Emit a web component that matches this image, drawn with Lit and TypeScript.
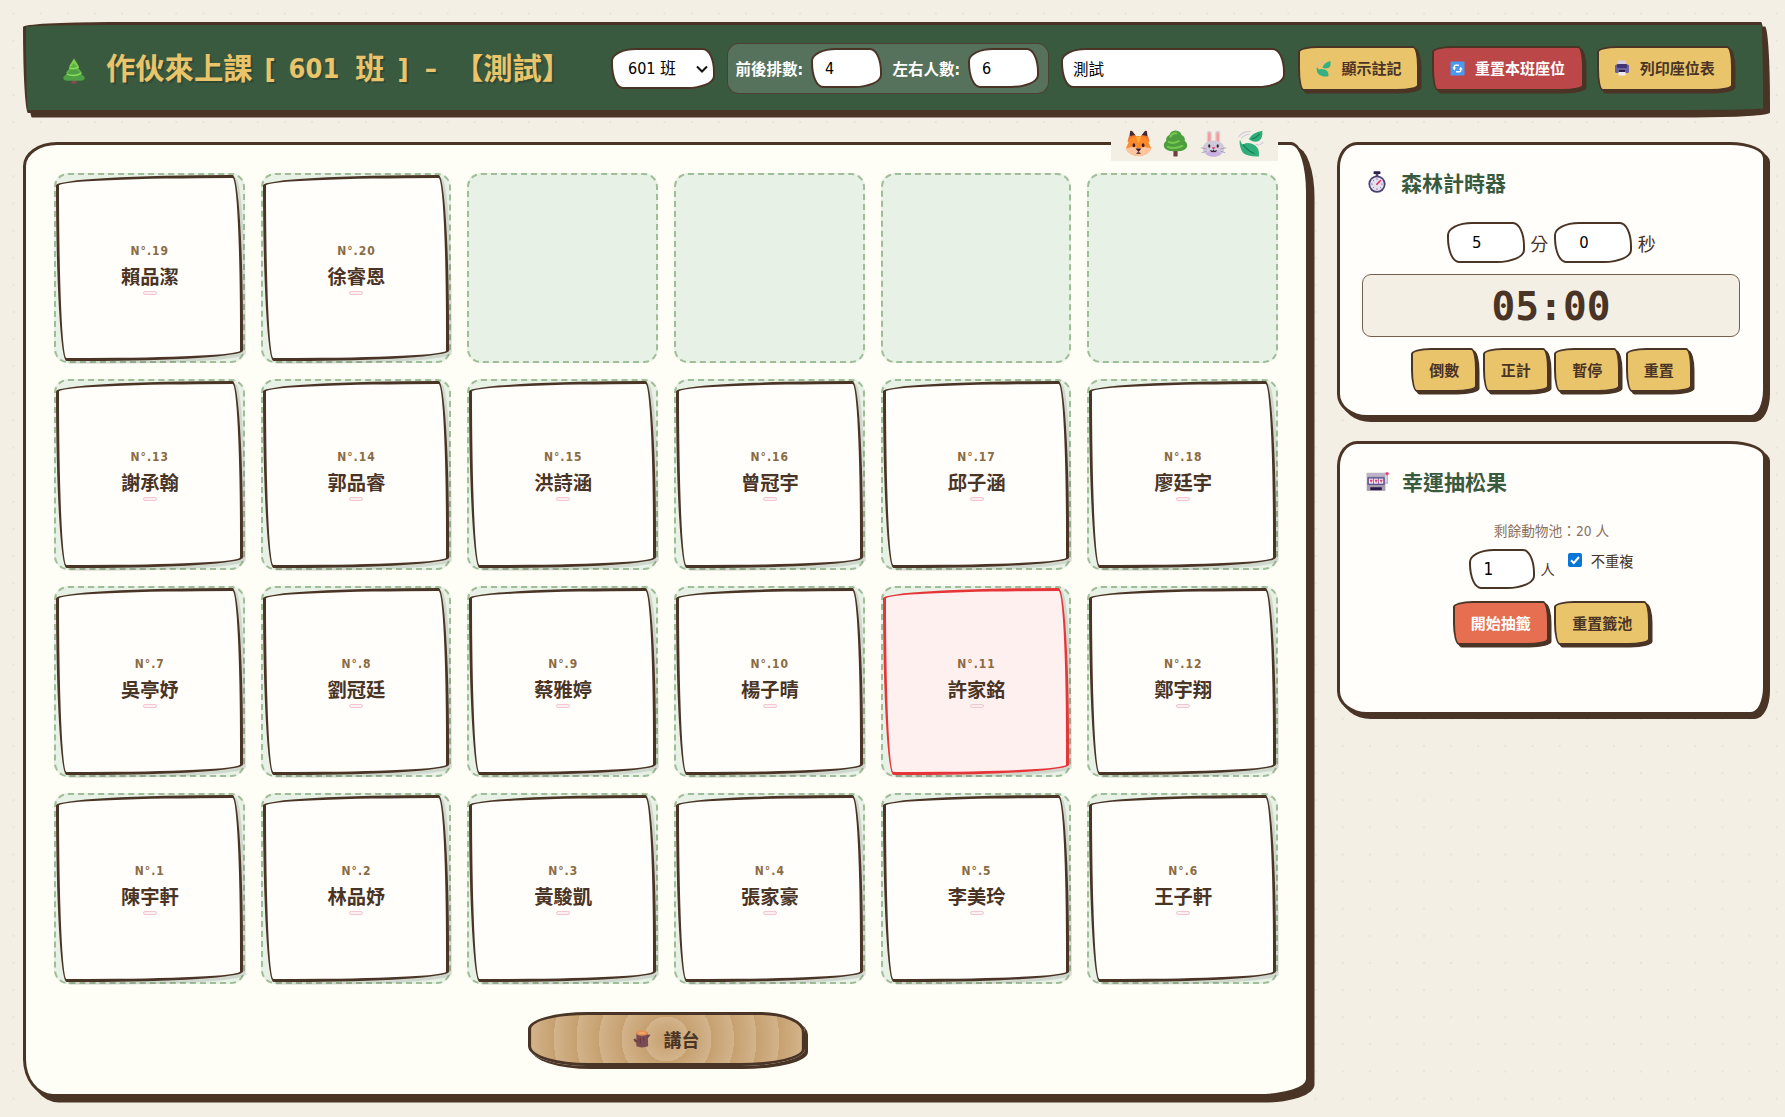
import { LitElement, html, css, svg, nothing } from "lit";
import { customElement, property } from "lit/decorators.js";

const ICONS: Record<string, unknown> = {
  pine: svg`<rect x="13" y="26" width="6" height="5.500" fill="#8b4a52"/><path d="M16 0.500 L22 10 Q16 14 10 10Z" fill="#7fcf4a"/><path d="M16 6 L26 18 Q16 23 6 18Z" fill="#5fb047"/><path d="M16 12 L29 23 Q30 28 24 28 H8 Q2 28 3 23Z" fill="#4f9f45"/><path d="M10 12 Q16 15 22 11 M7 19.500 Q16 24 25 18.500" stroke="#8ade55" stroke-width="1.800" fill="none"/>`,
  fox: svg`<path d="M3 14 L6 2 Q7 0 9 2 L14 8 H18 L23 2 Q25 0 26 2 L29 14 Z" fill="#f2722b"/><path d="M6 2 Q7 0 9 2 L12 6 L6 7Z M26 2 Q25 0 23 2 L20 6 L26 7Z" fill="#3d2a3a"/><path d="M4 15 Q5 7 16 7 Q27 7 28 15 L31 22 Q27 31 16 31 Q5 31 1 22Z" fill="#ff8a2c"/><path d="M1 22 Q10 18 16 22 Q22 18 31 22 Q27 31 16 31 Q5 31 1 22Z" fill="#ffc5a0"/><path d="M13 8 L16 16 L19 8Z" fill="#ffb13d"/><ellipse cx="10.500" cy="18" rx="1.600" ry="2.300" fill="#3b1f2b"/><ellipse cx="21.500" cy="18" rx="1.600" ry="2.300" fill="#3b1f2b"/><path d="M12.500 22 H19.500 L16 26Z M13 28 Q16 25 19 28" fill="#2f1a2a"/>`,
  tree: svg`<rect x="13.500" y="23" width="5" height="8.500" rx="1" fill="#6d4048"/><path d="M16 0.500 Q22 1 23 5.500 Q28 8 27 13 Q31 16 29.500 20.500 Q26 26 16 25 Q6 26 2.500 20.500 Q1 16 5 13 Q4 8 9 5.500 Q10 1 16 0.500Z" fill="#4d9e3e"/><path d="M10 8 Q12 3 17 4 M8 14 Q14 17 20 13 M7 20 Q14 23 24 19" stroke="#76c94e" stroke-width="2.400" fill="none" stroke-linecap="round"/>`,
  rabbit: svg`<rect x="8" y="1" width="6" height="15" rx="3" fill="#d6d0d8"/><rect x="18" y="1" width="6" height="15" rx="3" fill="#d6d0d8"/><rect x="9.500" y="3" width="3" height="12" rx="1.500" fill="#f79a9c"/><rect x="19.500" y="3" width="3" height="12" rx="1.500" fill="#f79a9c"/><ellipse cx="16" cy="22" rx="13" ry="9.700" fill="#cfcad8"/><ellipse cx="16" cy="28" rx="8.500" ry="3.500" fill="#c9b0e2"/><ellipse cx="11" cy="19" rx="1.300" ry="2" fill="#33202e"/><ellipse cx="21" cy="19" rx="1.300" ry="2" fill="#33202e"/><path d="M13.800 20.500 H18.200 L16 23.500Z" fill="#f4287d"/><path d="M12.500 24 Q14.500 27 16 24.500 Q17.500 27 19.500 24" stroke="#33202e" stroke-width="1.500" fill="none"/><path d="M1 21 L8 22.500 M2 27 L8 25 M31 21 L24 22.500 M30 27 L24 25" stroke="#a49cb3" stroke-width="1"/>`,
  leaf: svg`<path d="M3 13 Q3 21 7 27 Q13 32 26 31.500 Q27 20 19 17 Q12 14 8 17 Q5 17 4 12Z" fill="#2fae7b"/><path d="M14 11 Q18 3 30 1 Q31 10 26 13 Q21 15 16 12 Z" fill="#2fae7b"/><path d="M7 17 Q13 25 21 28 M17 11 Q23 9 27 5" stroke="#157a55" stroke-width="1.200" fill="none"/><path d="M2 8 Q7 1 16 2 M5 10 Q9 5 15 5 M31 14 Q28 19 22 17" stroke="#d3cbdc" stroke-width="1.300" fill="none"/>`,
  herb: svg`<path d="M3 15 Q3 26 11 29 Q17 32 25 31 Q27 21 18 18 Q11 16 7 18 Q6 17 5 14Z" fill="#35b083"/><path d="M14 14 Q17 5 29 2 Q31 12 25 15 Q19 17 14 14Z" fill="#35b083"/><path d="M4 10 Q9 3 16 4" stroke="#d8c194" stroke-width="3" fill="none"/>`,
  refresh: svg`<rect x="1" y="1" width="30" height="30" rx="2" fill="#4a9af0"/><path d="M9 16 V12 Q9 9 12 9 H19 M23 16 V20 Q23 23 20 23 H13" fill="none" stroke="#fff" stroke-width="3"/><path d="M5 14 H13 L9 20Z M19 18 H27 L23 12Z" fill="#fff"/>`,
  printer: svg`<rect x="8" y="1" width="16" height="11" fill="#d5cde4"/><rect x="2" y="9" width="28" height="17" rx="3" fill="#6a5fa3"/><rect x="6" y="8" width="20" height="8" rx="2" fill="#41376e"/><rect x="9" y="19" width="14" height="12" fill="#efeaf7"/><rect x="9" y="19" width="14" height="5" fill="#2a2050"/>`,
  timer: svg`<rect x="11" y="0.500" width="10" height="4" rx="1" fill="#2d1c4a"/><rect x="14" y="4" width="4" height="4" fill="#54457a"/><circle cx="16" cy="19" r="12.500" fill="#4a3d74"/><circle cx="16" cy="19" r="10" fill="#e5e0ee"/><path d="M16 10.500 V13 M16 25 V27.500 M7.500 19 H10 M22 19 H24.500 M10 13 L11.500 14.500 M10 25 L11.500 23.500 M22 25 L20.500 23.500" stroke="#7b7194" stroke-width="1.300"/><path d="M15 20 L21.500 13.500" stroke="#ea2860" stroke-width="2.400"/>`,
  slot: svg`<path d="M1 4 H27 V29 H1Z" fill="#a59cae"/><rect x="1" y="4" width="26" height="5" fill="#bcb3c6"/><rect x="2" y="10" width="24" height="11" rx="1" fill="#5b5590"/><rect x="4" y="12" width="6" height="7" fill="#fbe7f1"/><rect x="11" y="12" width="6" height="7" fill="#fbe7f1"/><rect x="18" y="12" width="6" height="7" fill="#fbe7f1"/><path d="M5 13.500 H9.500 L7 18Z M12 13.500 H16.500 L14 18Z M19 13.500 H23.500 L21 18Z" fill="#ee3a76"/><rect x="6" y="24" width="16" height="4" fill="#2b1648"/><path d="M27 18 H29.500 V7" stroke="#b5adbf" stroke-width="2" fill="none"/><circle cx="29.300" cy="5" r="2.300" fill="#f23c73"/>`,
  log: svg`<path d="M6 5 H26 L27 29 Q16 33 6 29Z" fill="#7a4b52"/><path d="M1 16 Q2 22 8 23 V18 Q5 18 4 15Z M31 9 L25 16 V10 L28 8Z" fill="#6b3f49"/><ellipse cx="16" cy="5.500" rx="10.500" ry="4.500" fill="#e39055"/><ellipse cx="16" cy="5.500" rx="6" ry="2" fill="#f2a56c"/><path d="M13 14 V24 M19 13 V19" stroke="#5e3540" stroke-width="1.500"/>`,
};

@customElement("forest-icon")
class ForestIcon extends LitElement {
  @property() name = "";
  @property({ type: Number }) size = 16;
  static styles = css`
    :host { display: inline-flex; flex: none; }
    svg { display: block; }
  `;
  render() {
    return html`<svg width=${this.size} height=${this.size} viewBox="0 0 32 32">${ICONS[this.name] ?? nothing}</svg>`;
  }
}

@customElement("seat-card")
class SeatCard extends LitElement {
  @property({ type: Number }) no = 0;
  @property() name = "";
  @property({ type: Boolean, reflect: true }) marked = false;
  static styles = css`
    :host {
      box-sizing: border-box; display: flex; flex-direction: column; align-items: center;
      width: 100%; height: 100%; padding: 65px 0 0 1px; background: #fffefb;
      border: 3px solid #4a3426;
      border-radius: 255px 15px 225px 15px / 15px 225px 15px 255px;
      box-shadow: 3px 3px 0 rgba(0, 0, 0, 0.1);
    }
    :host([marked]) { background: #fff0f0; border-color: #e63539; }
    .no {
      font: 700 12px/17px "DejaVu Sans Condensed", sans-serif;
      color: #8b6b43; letter-spacing: 1px;
    }
    .name { font: 700 19.3px/25px "Noto Sans CJK TC", sans-serif; margin-top: 4px; color: #4a3426; }
    .note {
      box-sizing: border-box; width: 14px; height: 4px; margin-top: 2px;
      border: 1px solid #f5c6d0; border-radius: 2px; background: #fdf0f2;
    }
  `;
  render() {
    return html`<span class="no">N°.${this.no}</span><span class="name">${this.name}</span><span class="note"></span>`;
  }
}

const ROWS: string[][] = [
  ["賴品潔", "徐睿恩", "", "", "", ""],
  ["謝承翰", "郭品睿", "洪詩涵", "曾冠宇", "邱子涵", "廖廷宇"],
  ["吳亭妤", "劉冠廷", "蔡雅婷", "楊子晴", "許家銘", "鄭宇翔"],
  ["陳宇軒", "林品妤", "黃駿凱", "張家豪", "李美玲", "王子軒"],
];

@customElement("app-root")
class AppRoot extends LitElement {
  static styles = css`
    :host {
      --ink: #4a3426; --gold: #e9c46a; --green: #3a5a40;
      box-sizing: border-box; display: block; width: 1785px; height: 1117px; overflow: hidden;
      padding: 22px 19px 0 23px; color: var(--ink);
      font-family: "DejaVu Sans Condensed", "Noto Sans CJK TC", sans-serif;
      background: radial-gradient(circle, #e8e3d8 1px, transparent 1.5px) 0 0 / 27.14px 27.14px #f4efe4;
    }
    * { box-sizing: border-box; }
    .header {
      display: flex; align-items: center; height: 91px; padding: 1px 28px 0 36px; white-space: nowrap;
      background: var(--green); border: 3px solid var(--ink);
      border-radius: 255px 15px 225px 15px / 15px 225px 15px 255px;
      box-shadow: 4px 4.5px 0 var(--ink);
    }
    .title {
      display: flex; align-items: center; width: 549px; margin: 1px 0 0; color: var(--gold);
      font: 700 29.3px/40px "DejaVu Sans Condensed", "Noto Sans CJK TC", sans-serif;
      text-shadow: 2px 2px 0 rgba(0, 0, 0, 0.2);
    }
    .title forest-icon { margin: 4px 19px 0 -1px; }
    .title .class-no { font-size: 27px; margin: 0 16px 0 13px; }
    .title .open { font-size: 27px; margin-left: 12px; }
    .title .close { font-size: 27px; margin-left: 13px; }
    .title .dash { font-size: 27px; margin: 0 17px 0 16px; }

    .field {
      height: 40px; padding: 0 12px; color: #000; background: #fff; outline: none;
      border: 2px solid var(--ink); border-radius: 25px 12px 28px 12px / 13px 24px 13px 25px;
      font: 400 16px/20px "DejaVu Sans Condensed", "Noto Sans CJK TC", sans-serif;
    }
    .select {
      display: flex; align-items: center; justify-content: space-between;
      width: 104px; height: 41px; padding: 1px 4px 0 15px;
    }
    .size-group {
      display: flex; align-items: center; height: 51px; margin-left: 11.5px; padding: 0 9px 0 8px;
      background: rgba(255, 255, 255, 0.15); border: 1px solid rgba(74, 52, 38, 0.8); border-radius: 12px;
      color: #fff; font-size: 15.5px; font-weight: 700;
    }
    .size-group span { width: 75.5px; }
    .size-group .field { width: 71px; margin-right: 10.5px; }
    .size-group .field:last-child { margin-right: 0; }
    .class-name { width: 224px; margin-left: 12px; margin-right: 12.5px; padding-left: 10px; font-size: 15.5px; }

    .btn {
      display: flex; align-items: center; justify-content: center; height: 45px; padding: 0;
      color: var(--ink); background: var(--gold); border: 2px solid var(--ink);
      border-radius: 20px 6px 22px 6px / 6px 20px 6px 22px; box-shadow: 2.5px 2.5px 0 var(--ink);
      font: 700 15px/20px "Noto Sans CJK TC", sans-serif;
    }
    .header .btn { gap: 9.500px; margin-right: 12.5px; }
    .header .btn:last-child { margin-right: 0; }
    .btn.notes { width: 121.5px; }
    .btn.reset { width: 152.5px; background: #bc4749; color: #fff; }
    .btn.print { width: 136px; }

    .main { display: flex; gap: 28px; margin-top: 29px; align-items: flex-start; }
    .board {
      position: relative; width: 1286px; height: 955px; padding: 27.5px 0 0 28px;
      background: #fffef6; border: 3px solid var(--ink);
      border-radius: 34px 18px 50px 30px / 24px 50px 18px 38px;
      box-shadow: 5.500px 5.500px 0 var(--ink);
    }
    .animals {
      position: absolute; top: -20px; right: 28px; width: 167px; height: 36px;
      display: flex; justify-content: space-between; align-items: center; padding: 0 14px;
      background: #f4efe4;
    }
    .grid { display: grid; grid-template: repeat(4, 190.8px) / repeat(6, 190.6px); gap: 16px 16.1px; }
    .slot { border: 2px dashed #a0bd99; border-radius: 14px; background: #e8f1e6; }
    .podium {
      display: flex; align-items: center; justify-content: center; gap: 13px;
      width: 277px; height: 54px; margin: 28px 0 0 473.500px; padding-top: 1px;
      border: 3px solid var(--ink); border-radius: 60px 45px 65px 60px / 17px 20px 17px 20px;
      box-shadow: 3px 3px 0 var(--ink);
      background: repeating-radial-gradient(circle at center, #c6a06f 0, #d3b38b 22.500px);
      font: 700 18px/24px "Noto Sans CJK TC", sans-serif;
    }

    .side { display: flex; flex-direction: column; gap: 23px; width: 429px; }
    .panel {
      display: flex; flex-direction: column; align-items: center; height: 276px; padding: 0 22px;
      background: #fffefb; border: 3px solid var(--ink);
      border-radius: 20px 36px 15px 30px / 25px 16px 28px 24px;
      box-shadow: 4px 4px 0 var(--ink);
    }
    .panel + .panel { height: 274px; }
    .panel h2 {
      display: flex; align-items: center; align-self: stretch; height: 30px; margin: 22px 0 0 4px;
      color: var(--green); font: 700 21px/30px "Noto Sans CJK TC", sans-serif;
    }
    .panel h2 forest-icon { margin-right: 13px; }
    .time { display: flex; align-items: center; height: 41px; margin: 25px 0 0 5px; font-size: 18px; }
    .time .field { width: 78px; height: 41px; padding: 0 18px 0 0; text-align: center; font-size: 16.500px; }
    .time span { margin: 0 5.700px; }
    .display {
      display: flex; align-items: center; justify-content: center; align-self: stretch; height: 63px;
      margin: 11px 1px 0 0; border: 1px solid #75604f; border-radius: 9px; background: #f4efe4;
      font: 700 39.500px/40px "DejaVu Sans Mono", monospace;
    }
    .buttons { display: flex; gap: 5.500px; margin-top: 11px; }
    .buttons .btn { width: 66px; height: 44px; }
    .buttons .btn.wide { width: 96px; }
    .btn.draw { background: #e76f51; color: #fff; }
    .pool { margin-top: 24px; color: #8a7060; font-size: 13.700px; line-height: 22px; }
    .options { display: flex; height: 40px; margin-top: 7px; font-size: 14.300px; line-height: 20px; }
    .options .field { width: 66px; font-size: 17px; }
    .options .person { margin: 11px 13px 0 5px; }
    .check { display: flex; height: 26px; align-items: center; gap: 9px; }
    .check svg { display: block; margin-top: -5px; }
    .options + .buttons { margin-top: 12px; }
  `;

  private slots() {
    return ROWS.flatMap((row, r) =>
      row.map((name, c) => {
        const no = (ROWS.length - 1 - r) * 6 + c + 1;
        return html`<div class="slot">
          ${name ? html`<seat-card .no=${no} .name=${name} ?marked=${no === 11}></seat-card>` : nothing}
        </div>`;
      }),
    );
  }

  render() {
    return html`
      <header class="header">
        <h1 class="title">
          <forest-icon name="pine" .size=${26}></forest-icon>
          <span>作伙來上課</span><span class="open">[</span><span class="class-no">601</span><span>班</span
          ><span class="close">]</span><span class="dash">–</span><span>【測試】</span>
        </h1>
        <div class="field select">
          <span>601 班</span>
          <svg width="14" height="10" viewBox="0 0 14 10"><path d="M2 2.500 L7 7.500 L12 2.500" fill="none" stroke="#111" stroke-width="2"/></svg>
        </div>
        <div class="size-group">
          <span>前後排數:</span><input class="field" .value=${"4"} />
          <span>左右人數:</span><input class="field" .value=${"6"} />
        </div>
        <input class="field class-name" .value=${"測試"} />
        <button class="btn notes"><forest-icon name="herb" .size=${17}></forest-icon>顯示註記</button>
        <button class="btn reset"><forest-icon name="refresh" .size=${15}></forest-icon>重置本班座位</button>
        <button class="btn print"><forest-icon name="printer" .size=${16}></forest-icon>列印座位表</button>
      </header>
      <main class="main">
        <section class="board">
          <div class="animals">
            ${["fox", "tree", "rabbit", "leaf"].map((n) => html`<forest-icon name=${n} .size=${27}></forest-icon>`)}
          </div>
          <div class="grid">${this.slots()}</div>
          <div class="podium"><forest-icon name="log" .size=${18}></forest-icon>講台</div>
        </section>
        <aside class="side">
          <section class="panel">
            <h2><forest-icon name="timer" .size=${22}></forest-icon>森林計時器</h2>
            <div class="time">
              <input class="field" .value=${"5"} /><span>分</span><input class="field" .value=${"0"} /><span>秒</span>
            </div>
            <div class="display">05:00</div>
            <div class="buttons">
              ${["倒數", "正計", "暫停", "重置"].map((t) => html`<button class="btn">${t}</button>`)}
            </div>
          </section>
          <section class="panel">
            <h2><forest-icon name="slot" .size=${23}></forest-icon>幸運抽松果</h2>
            <div class="pool">剩餘動物池：20 人</div>
            <div class="options">
              <input class="field" .value=${"1"} /><span class="person">人</span>
              <label class="check">
                <svg width="14" height="14" viewBox="0 0 14 14"><rect width="14" height="14" rx="2" fill="#0975d7"/><path d="M3 7.300 L5.800 10 L11 4" fill="none" stroke="#fff" stroke-width="2"/></svg>
                <span>不重複</span>
              </label>
            </div>
            <div class="buttons">
              <button class="btn wide draw">開始抽籤</button><button class="btn wide">重置籤池</button>
            </div>
          </section>
        </aside>
      </main>
    `;
  }
}
